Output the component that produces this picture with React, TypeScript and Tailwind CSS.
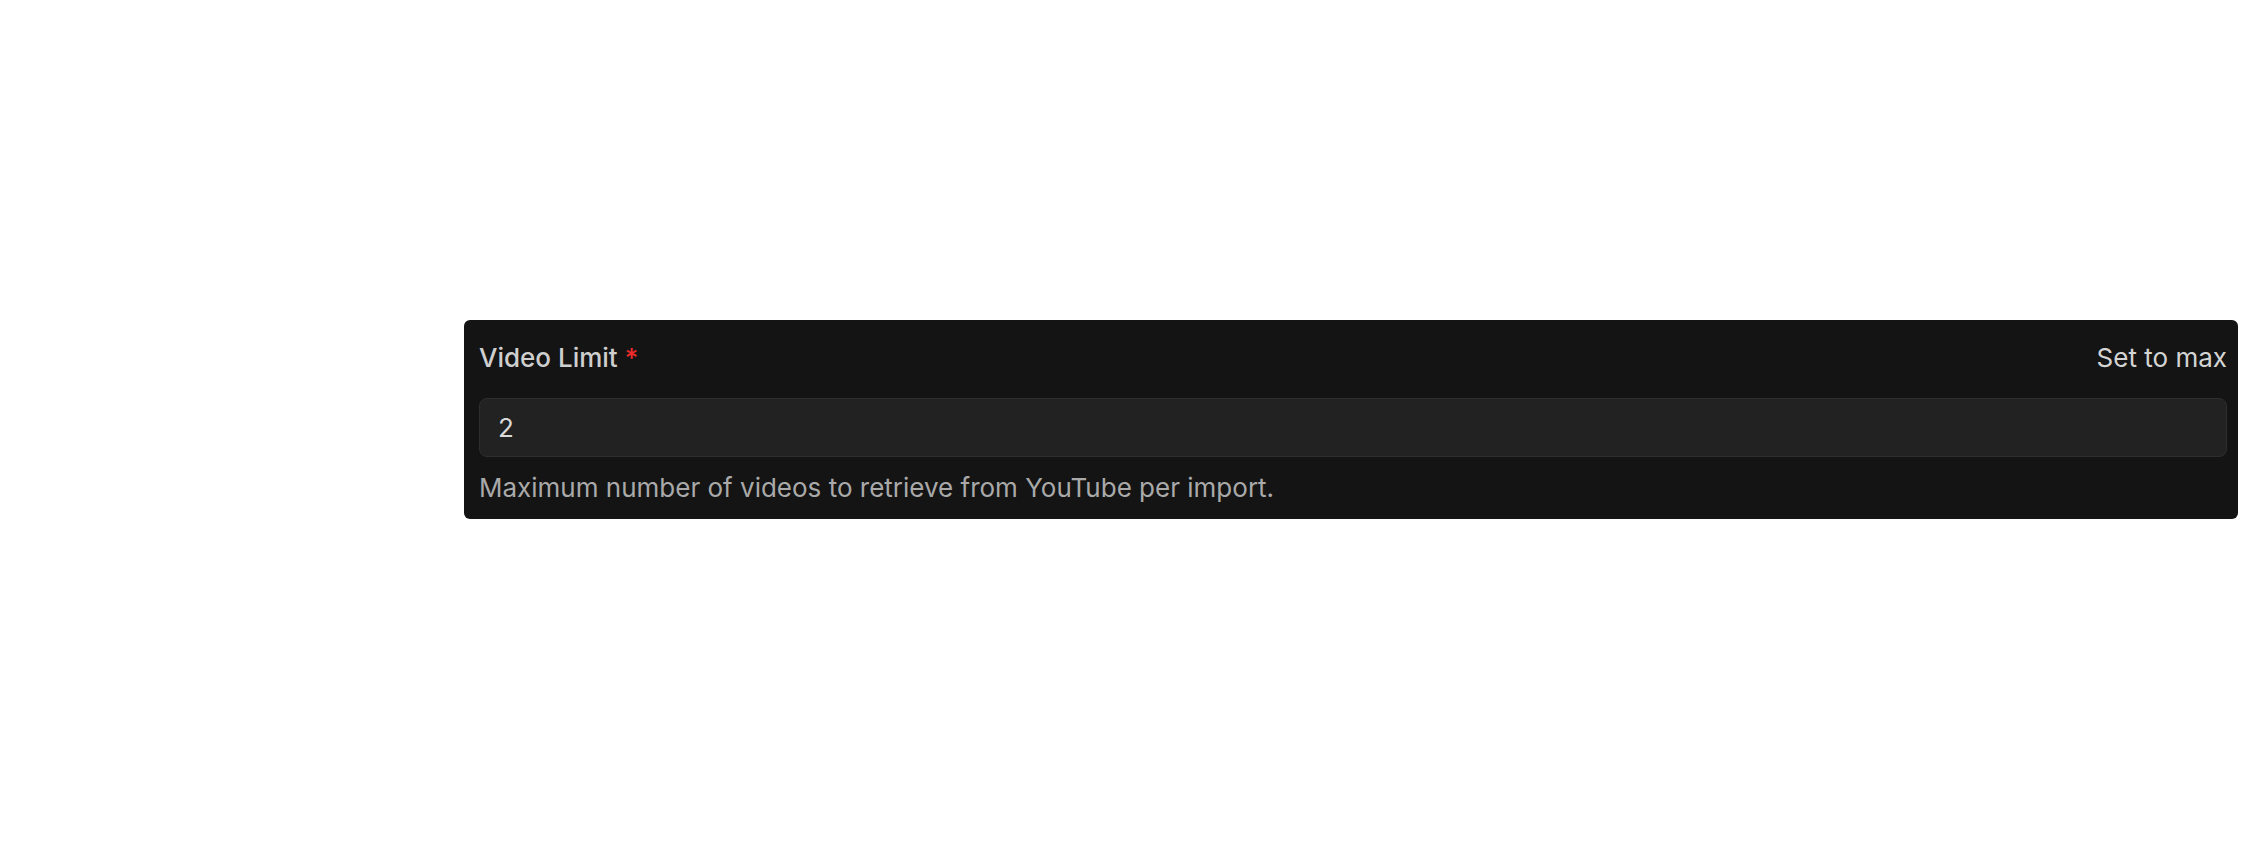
export default function App() {
  return (
    <div
      className="min-h-[860px] w-full bg-white pl-[464px] pt-[320px]"
      style={{ fontFamily: "Inter, 'Noto Sans', sans-serif" }}
    >
      <div className="w-[1774px] rounded-[6px] bg-[#141414] pb-[18px] pl-[15px] pr-[11px] pt-[20px]">
        <div className="flex h-[36px] flex-row items-center justify-between text-[26px] leading-[36px]">
          <label className="font-medium text-[#cfcfcf]">
            Video Limit <span className="text-[#ef2b2b]">*</span>
          </label>
          <button className="text-[#d4d4d4]">Set to max</button>
        </div>
        <div className="mt-[22px] flex h-[59px] items-center rounded-[8px] border border-[#2e2e2e] bg-[#222222] px-[18px] text-[26px] text-[#dadada]">
          2
        </div>
        <p className="mt-[18px] text-[26px] leading-[26px] text-[#a9a9a9]">
          Maximum number of videos to retrieve from YouTube per import.
        </p>
      </div>
    </div>
  );
}
